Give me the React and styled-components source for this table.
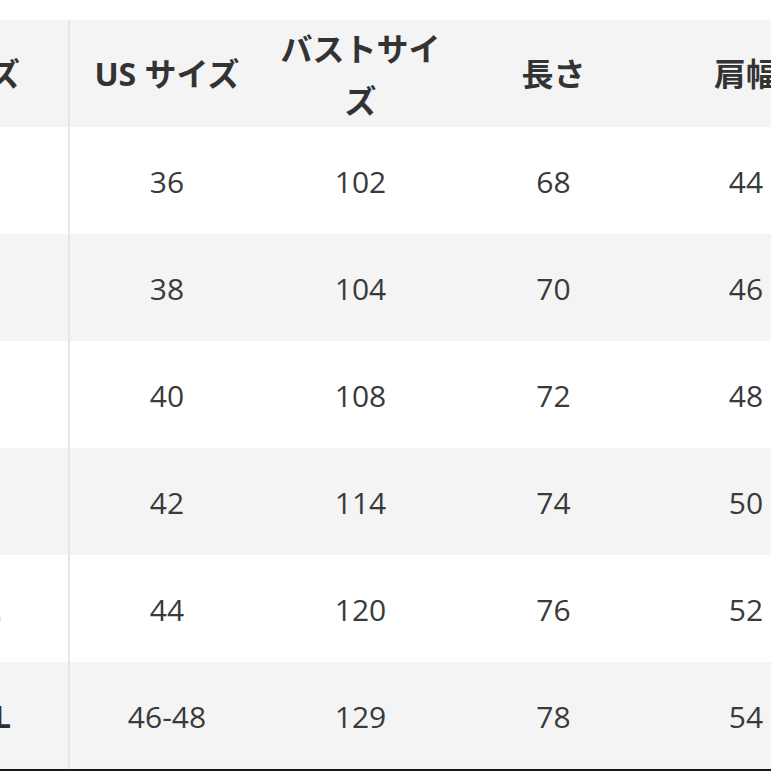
import React from 'react';
import styled, { createGlobalStyle } from 'styled-components';

const GlobalStyle = createGlobalStyle`
  html, body {
    margin: 0;
    padding: 0;
    background: #ffffff;
    overflow: hidden;
  }
  body {
    font-family: "Open Sans", "Noto Sans CJK JP", sans-serif;
    color: #333333;
  }
`;

const headers = ['サイズ', 'US サイズ', 'バストサイズ', '長さ', '肩幅'];

const rows = [
  ['S', '36', '102', '68', '44'],
  ['M', '38', '104', '70', '46'],
  ['L', '40', '108', '72', '48'],
  ['XL', '42', '114', '74', '50'],
  ['XXL', '44', '120', '76', '52'],
  ['XXXL', '46-48', '129', '78', '54'],
];

const App = () => {
  return (
    <>
      <GlobalStyle />
      <Page>
        <Table>
          <Row $shaded>
            {headers.map((h, i) => (
              <HeadCell key={i} $first={i === 0}>
                <HeadText $narrow={i === 2}>{h}</HeadText>
              </HeadCell>
            ))}
          </Row>
          {rows.map((row, r) => (
            <Row key={r} $shaded={r % 2 === 1}>
              {row.map((v, i) => (
                <Cell key={i} $first={i === 0}>
                  {v}
                </Cell>
              ))}
            </Row>
          ))}
        </Table>
        <BottomEdge />
      </Page>
    </>
  );
};

const Page = styled.div`
  width: 771px;
  height: 771px;
  overflow: hidden;
  padding-top: 20px;
  box-sizing: border-box;
  display: flex;
  flex-direction: column;
`;

const Table = styled.div`
  display: flex;
  flex-direction: column;
  margin-left: -123px;
  width: 965px;
  flex-shrink: 0;
`;

const Row = styled.div`
  display: grid;
  grid-template-columns: 193px 194px 193px 193px 192px;
  height: 107px;
  background: ${(p) => (p.$shaded ? '#f4f4f4' : '#ffffff')};
`;

const Cell = styled.div`
  display: flex;
  align-items: center;
  justify-content: center;
  font-size: 30px;
  font-weight: ${(p) => (p.$first ? 700 : 400)};
  color: ${(p) => (p.$first ? '#2e2e2e' : '#3a3a3a')};
  border-right: ${(p) => (p.$first ? '2px solid #e6e6e6' : 'none')};
  padding-top: 2px;
  box-sizing: border-box;
`;

const HeadCell = styled(Cell)`
  font-size: 32px;
  font-weight: 700;
  color: #333333;
  padding-top: 0;
`;

const HeadText = styled.span`
  display: block;
  text-align: center;
  line-height: 52px;
  max-width: ${(p) => (p.$narrow ? '170px' : 'none')};
  margin-top: ${(p) => (p.$narrow ? '2px' : '0')};
`;

const BottomEdge = styled.div`
  height: 2px;
  background: #1a1a1a;
  flex-shrink: 0;
`;

export default App;
